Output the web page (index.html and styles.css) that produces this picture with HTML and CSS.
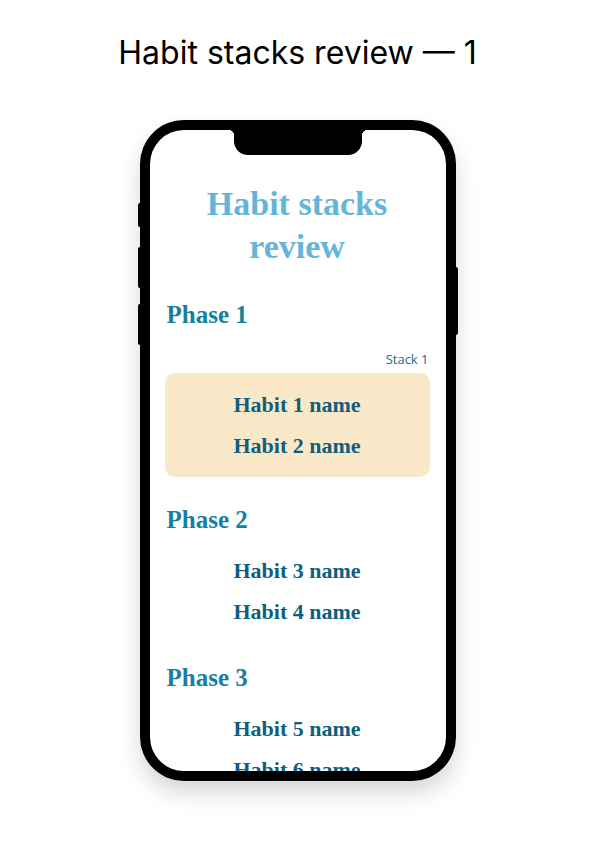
FILE: index.html
```html
<!DOCTYPE html>
<html lang="en">
<head>
<meta charset="utf-8">
<title>Habit stacks review — 1</title>
<link rel="stylesheet" href="styles.css">
</head>
<body>
<header class="page-head">
  <h1 class="page-title">Habit stacks review — 1</h1>
</header>
<main class="stage">
  <div class="phone">
    <span class="btn btn-mute"></span>
    <span class="btn btn-vol-up"></span>
    <span class="btn btn-vol-down"></span>
    <span class="btn btn-power"></span>
    <div class="screen">
      <div class="notch"></div>
      <div class="app">
        <h2 class="app-title">Habit stacks review</h2>

        <section class="phase">
          <h3 class="phase-title">Phase 1</h3>
          <div class="stack-label">Stack 1</div>
          <ul class="habits habits-card">
            <li class="habit">Habit 1 name</li>
            <li class="habit">Habit 2 name</li>
          </ul>
        </section>

        <section class="phase">
          <h3 class="phase-title">Phase 2</h3>
          <ul class="habits habits-plain">
            <li class="habit">Habit 3 name</li>
            <li class="habit">Habit 4 name</li>
          </ul>
        </section>

        <section class="phase">
          <h3 class="phase-title">Phase 3</h3>
          <ul class="habits habits-plain">
            <li class="habit">Habit 5 name</li>
            <li class="habit">Habit 6 name</li>
          </ul>
        </section>
      </div>
    </div>
  </div>
</main>
</body>
</html>
```

FILE: styles.css
```css
* { box-sizing: border-box; }

html, body {
  margin: 0;
  padding: 0;
  background: #ffffff;
}

body {
  width: 595px;
  height: 843px;
  overflow: hidden;
  font-family: "Liberation Serif", serif;
}

.page-head {
  height: 120px;
  padding-top: 31px;
}

.page-title {
  margin: 0;
  text-align: center;
  font-family: Inter, "Liberation Sans", sans-serif;
  font-weight: 400;
  font-size: 32px;
  line-height: 44px;
  color: #000;
}

.stage {
  display: flex;
  justify-content: center;
}

.phone {
  position: relative;
  width: 316px;
  height: 661px;
  background: #000;
  border-radius: 44px;
  padding: 10px;
  box-shadow: 0 12px 22px rgba(0, 0, 0, 0.16);
}

.btn {
  position: absolute;
  background: #000;
  width: 4px;
  border-radius: 2px;
}
.btn-mute { left: -2px; top: 83px; height: 24px; }
.btn-vol-up { left: -2px; top: 127px; height: 41px; }
.btn-vol-down { left: -2px; top: 184px; height: 41px; }
.btn-power { right: -2px; top: 147px; height: 68px; }

.screen {
  position: relative;
  width: 296px;
  height: 641px;
  background: #fff;
  border-radius: 34px;
  overflow: hidden;
}

.notch {
  position: absolute;
  top: 0;
  left: 84px;
  width: 128px;
  height: 25px;
  background: #000;
  border-radius: 0 0 14px 14px;
  z-index: 2;
}
.notch::before,
.notch::after {
  content: "";
  position: absolute;
  top: 0;
  width: 6px;
  height: 6px;
}
.notch::before {
  left: -6px;
  background: radial-gradient(circle at 0 100%, transparent 6px, #000 6.5px);
}
.notch::after {
  right: -6px;
  background: radial-gradient(circle at 100% 100%, transparent 6px, #000 6.5px);
}

.app {
  padding: 52px 16px 0 15px;
}

.app-title {
  margin: 0 0 32px;
  text-align: center;
  font-family: "Liberation Serif", serif;
  font-weight: 700;
  font-size: 34px;
  line-height: 43px;
  color: #65b5da;
}

.phase {
  display: flex;
  flex-direction: column;
}
.phase + .phase {
  margin-top: 28px;
}
.phase:last-child {
  margin-top: 20px;
}

.phase-title {
  margin: 0 0 4px 2px;
  font-weight: 700;
  font-size: 25px;
  line-height: 30px;
  color: #16809f;
}

.stack-label {
  margin: 16px 1px 5px 0;
  text-align: right;
  font-family: "Open Sans", sans-serif;
  font-size: 13px;
  line-height: 18px;
  color: #1b6a8a;
}

.habits {
  list-style: none;
  margin: 0;
  padding: 11px 0;
}
.habits-card {
  background: #f9e8c8;
  border-radius: 10px;
}

.habit {
  text-align: center;
  font-weight: 700;
  font-size: 22px;
  line-height: 41px;
  color: #0e5f7e;
}
```
